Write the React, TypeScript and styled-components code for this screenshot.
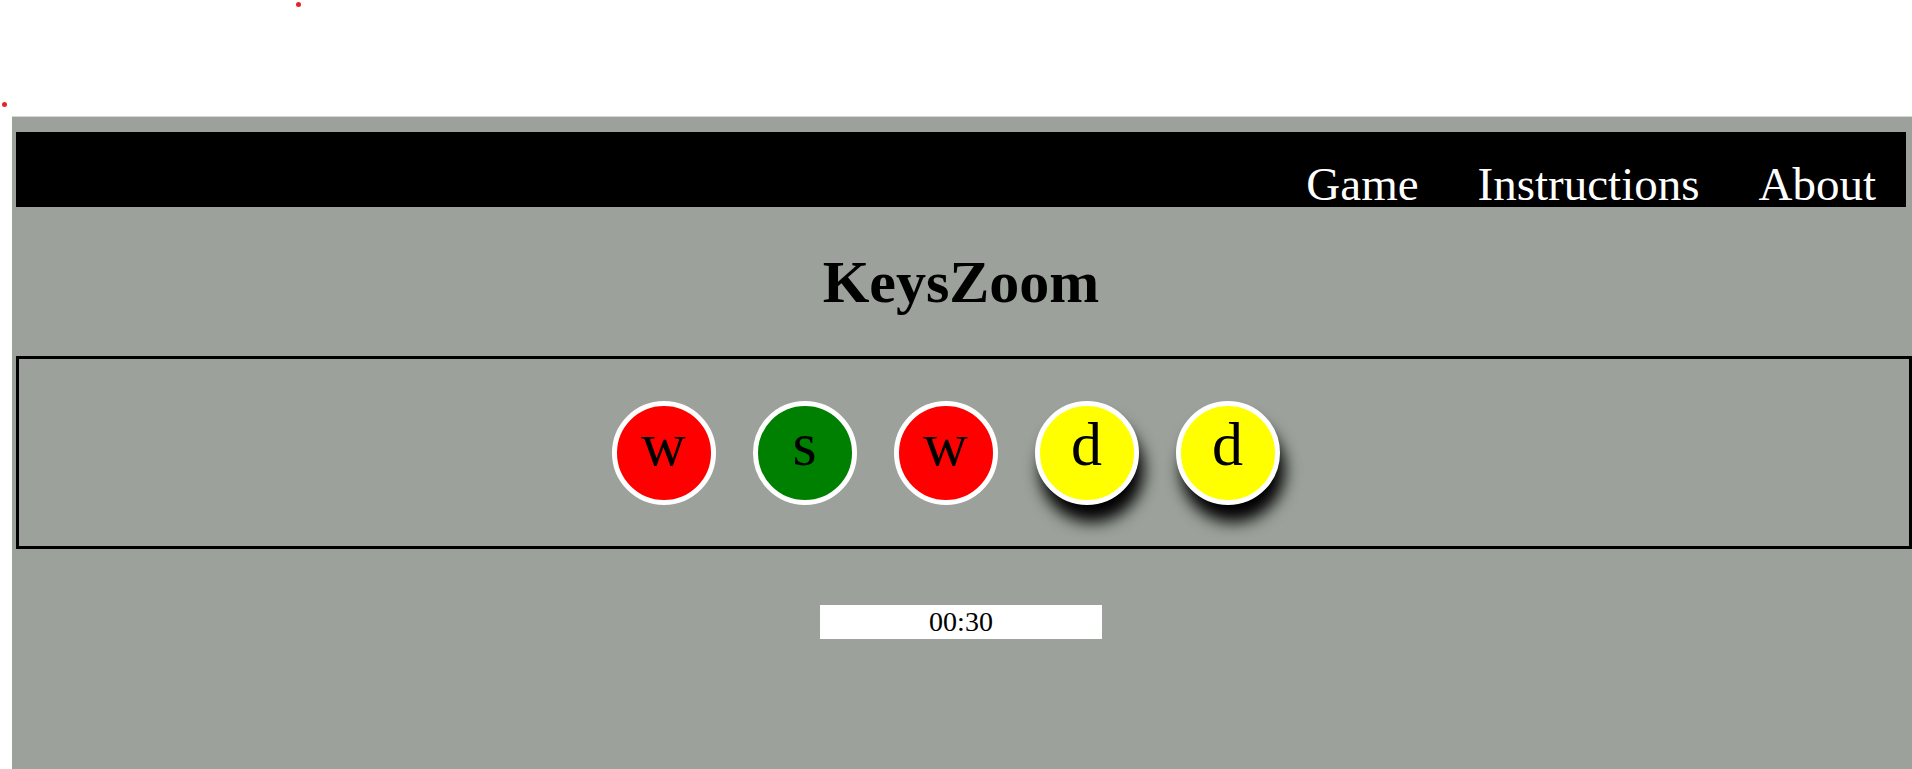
import React from "react";
import styled, { createGlobalStyle } from "styled-components";

const GlobalStyle = createGlobalStyle`
  html, body {
    margin: 0;
    padding: 0;
    background: #ffffff;
    overflow: hidden;
    font-family: "Liberation Serif", "Times New Roman", serif;
  }
`;

const Page = styled.div`
  position: relative;
  min-height: 769px;
  padding-top: 116px;
  box-sizing: border-box;
`;

const Dot = styled.span<{ $x: number; $y: number }>`
  position: absolute;
  left: ${(p) => p.$x - 2}px;
  top: ${(p) => p.$y - 2}px;
  width: 5px;
  height: 5px;
  border-radius: 50%;
  background: #e8202a;
`;

const Main = styled.main`
  margin-left: 12px;
  min-height: 653px;
  background: #9ca29b;
  border-top: 1px solid #d5d7d4;
  padding: 15px 0 0 4px;
  box-sizing: border-box;
`;

const Nav = styled.nav`
  width: 1890px;
  height: 75px;
  background: #000000;
  display: flex;
  justify-content: flex-end;
  align-items: flex-end;
  padding-right: 30px;
  box-sizing: border-box;
`;

const NavLink = styled.a`
  color: #ffffff;
  text-decoration: none;
  font-size: 47px;
  line-height: 46px;
  margin-left: 59px;
  cursor: pointer;
`;

const Title = styled.h1`
  width: 1890px;
  margin: 41px 0 39px;
  text-align: center;
  font-size: 60px;
  font-weight: 700;
  line-height: 69px;
  color: #000000;
`;

const GameBox = styled.section`
  width: 1890px;
  height: 187px;
  border: 3px solid #000000;
  display: flex;
  justify-content: center;
  align-items: center;
`;

const KeyCircle = styled.div<{ $bg: string; $shadow?: boolean }>`
  width: 94px;
  height: 94px;
  border: 5px solid #ffffff;
  border-radius: 50%;
  background: ${(p) => p.$bg};
  margin-right: 37px;
  text-align: center;
  font-size: 62px;
  line-height: 76px;
  color: #000000;
  box-shadow: ${(p) => (p.$shadow ? "5px 17px 16px #000000" : "none")};
`;

const Timer = styled.div`
  width: 282px;
  height: 34px;
  margin: 56px 0 0 804px;
  background: #ffffff;
  text-align: center;
  font-size: 28px;
  line-height: 34px;
  color: #000000;
`;

const keys = [
  { k: "w", bg: "#ff0000", shadow: false },
  { k: "s", bg: "#008000", shadow: false },
  { k: "w", bg: "#ff0000", shadow: false },
  { k: "d", bg: "#ffff00", shadow: true },
  { k: "d", bg: "#ffff00", shadow: true },
];

export default function App() {
  return (
    <>
      <GlobalStyle />
      <Page>
        <Dot $x={298} $y={4} />
        <Dot $x={4} $y={104} />
        <Main>
          <Nav>
            <NavLink>Game</NavLink>
            <NavLink>Instructions</NavLink>
            <NavLink>About</NavLink>
          </Nav>
          <Title>KeysZoom</Title>
          <GameBox>
            {keys.map((item, i) => (
              <KeyCircle key={i} $bg={item.bg} $shadow={item.shadow}>
                {item.k}
              </KeyCircle>
            ))}
          </GameBox>
          <Timer>00:30</Timer>
        </Main>
      </Page>
    </>
  );
}
